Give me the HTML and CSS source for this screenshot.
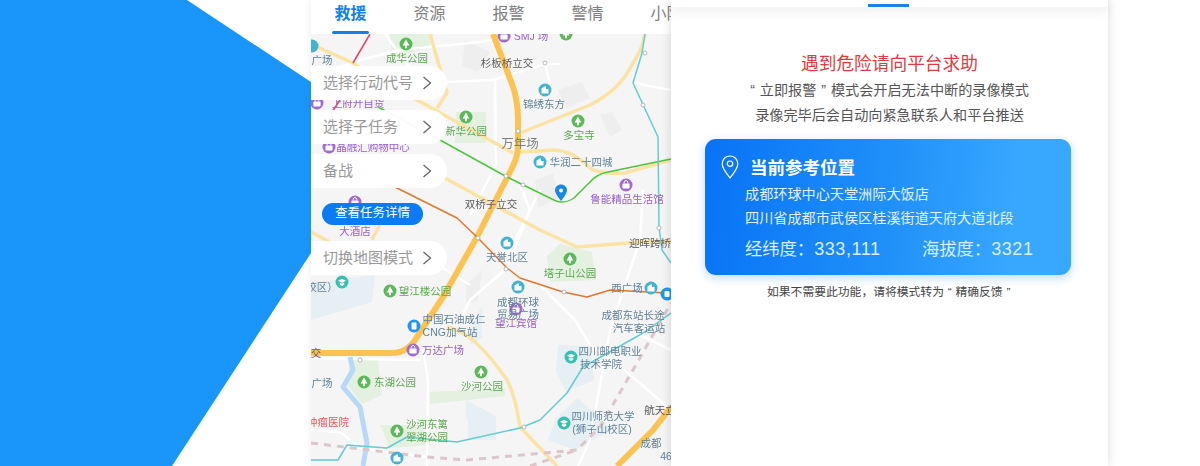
FILE: index.html
```html
<!DOCTYPE html>
<html lang="zh-CN">
<head>
<meta charset="utf-8">
<title>救援</title>
<link rel="stylesheet" href="styles.css">
</head>
<body>
<div class="page">
  <div class="wedge"></div>
  <section class="phone">
    <nav class="tabs">
      <span class="tab tab-on">救援</span>
      <span class="tab">资源</span>
      <span class="tab">报警</span>
      <span class="tab">警情</span>
      <span class="tab">小阳</span>
    </nav>
    <div class="map">
      <svg class="map-svg" viewBox="311 34 360 432" width="360" height="432" xmlns="http://www.w3.org/2000/svg">
        <defs>
          <symbol id="tree" viewBox="-7 -7 14 14"><circle r="6.5" fill="#5cb85a"/><path d="M0-4.500 3.400 1.600H.9V4.200H-.9V1.600H-3.400Z" fill="#fff"/></symbol>
          <symbol id="bag" viewBox="-7 -7 14 14"><circle r="6.500" fill="#a26ad0"/><rect x="-3.600" y="-1.600" width="7.200" height="5.200" rx="1" fill="#fff"/><path d="M-1.800-1.600V-2.600A1.800 1.800 0 0 1 1.800-2.600V-1.600" fill="none" stroke="#fff"/></symbol>
          <symbol id="bld" viewBox="-7 -7 14 14"><circle r="6.500" fill="#45b3cf"/><path d="M-3.500 3.400V-1.500L0-3.800 1 -3.200V-1H3.500V3.400Z" fill="#fff"/></symbol>
          <symbol id="sch" viewBox="-7 -7 14 14"><circle r="6.500" fill="#35c0b0"/><path d="M-4-1.200 0-3.200 4-1.200 0 .8ZM-2.200.5 0 1.600 2.200.5V2.800L0 4-2.200 2.800Z" fill="#fff"/></symbol>
        </defs>
        <rect class="ground" x="311" y="34" width="360" height="432"/>
        <path class="park" d="M455 143 456 112 486 112 486 143Z"/>
        <path class="park" d="M390 34 434 34 428 48 392 58Z"/>
        <path class="park" d="M547 256 560 244 592 252 596 280 550 282Z"/>
        <path class="park" d="M350 357 378 360 382 395 362 404 347 385Z"/>
        <path class="park" d="M380 425 420 425 432 445 390 448Z"/>
        <path class="park" d="M430 392 505 388 505 396 430 404Z"/>
        <path class="pale" d="M558 345 590 346 594 380 566 392 556 372Z"/>
        <path class="pale" d="M311 283 375 275 372 302 345 310 311 320Z"/>
        <path class="pale" d="M556 418 578 398 612 430 575 450 548 440Z"/>
        <path class="pale" d="M470 330 482 305 482 338 470 345Z"/>
        <path class="pale" d="M468 420 466 418 466 400 496 416 496 440 468 440Z"/>
        <path class="block" d="M466 285 482 270 478 302 466 302Z"/>
        <path class="block" d="M600 115 612 112 622 130 610 137Z"/>
        <path class="block" d="M558 90 582 82 590 98 566 108Z"/>
        <path class="block" d="M465 40 490 52 478 72 462 66Z"/>
        <path class="block" d="M535 180 553 174 560 198 538 208Z"/>
        <g class="road-w">
          <path d="M311 78 360 60 400 50 480 42 510 36"/>
          <path d="M446 82 493 80 545 64 560 64"/>
          <path d="M495 80 496 165 470 215"/>
          <path d="M545 64 552 92 536 96"/>
          <path d="M385 34 415 75M353 63 400 85"/>
          <path d="M520 185 530 210 507 268 470 300 460 320"/>
          <path d="M540 190 515 240 505 258"/>
          <path d="M540 285 575 320 590 345 615 362 671 410"/>
          <path d="M643 190 640 240 610 330 590 440 578 466"/>
          <path d="M311 430 340 432 360 448 427 457"/>
          <path d="M423 350 428 380 427 466"/>
          <path d="M633 83 671 90"/>
          <path d="M640 335 671 350"/>
          <path d="M430 260 470 285"/>
          <path d="M311 358 420 360"/>
        </g>
        <g class="road-y">
          <path d="M311 44 353 63 380 82 417 100 513 153"/>
          <path d="M430 34 447 93 437 108"/>
          <path d="M520 133 590 105Q620 90 633 63 642 50 645 34"/>
          <path d="M520 152 555 150Q575 152 590 168 598 174 625 173L671 160"/>
          <path d="M443 177 540 230 577 247 640 242 671 241"/>
          <path d="M447 327Q460 330 473 340 490 355 507 380 515 395 520 427L557 466"/>
          <path d="M311 232 345 250M382 220 372 240"/>
        </g>
        <path class="river" d="M350 357 353 370 343 387 360 407 367 443 363 466"/>
        <path class="rail" d="M311 443 427 457 467 460 577 450 600 427 633 370 671 303"/>
        <path class="rail" d="M530 466 577 450"/>
        <path class="road-o" d="M493 34 512 84Q518 100 518 120L518 146Q518 155 513 166L477 237 443 297 417 337Q408 353 392 353L311 353"/>
        <path class="road-o" d="M671 407 653 430 617 466"/>
        <path class="line-r" d="M370 34 353 63"/>
        <path class="line-r" d="M340 100 330 115"/>
        <path class="line-g" d="M378 107 440 140 507 177 556 201Q565 204 574 198L590 182Q597 174 608 172L671 159"/>
        <path class="line-c" d="M395 187 457 218 478 238 507 268 520 278 563 292 587 297 610 290 667 293"/>
        <path class="line-t" d="M645 34 642 53 633 83 658 137 659 227 662 250 671 263"/>
        <path class="line-t" d="M311 460 338 460 347 445 387 448 407 437 457 442 520 428 540 420 567 393 583 367 643 333 671 313"/>
        <g class="station">
          <circle cx="645" cy="53" r="2"/><circle cx="545" cy="63" r="2"/><circle cx="518" cy="131" r="2"/><circle cx="643" cy="105" r="2"/>
          <circle cx="506" cy="176" r="2"/><circle cx="523" cy="185" r="2"/><circle cx="478" cy="238" r="2"/><circle cx="659" cy="228" r="2"/>
          <circle cx="506" cy="269" r="2"/><circle cx="564" cy="292" r="2"/><circle cx="360" cy="360" r="2"/><circle cx="524" cy="427" r="2"/>
        </g>

        <use href="#bag" x="497" y="29" width="14" height="14"/>
        <use href="#tree" x="399" y="37" width="14" height="14"/>
        <use href="#tree" x="559" y="27" width="14" height="14"/>
        <use href="#bld" x="538" y="83" width="14" height="14"/>
        <use href="#tree" x="459" y="110" width="14" height="14"/>
        <use href="#tree" x="571" y="114" width="14" height="14"/>
        <use href="#bld" x="533" y="155" width="14" height="14"/>
        <use href="#bag" x="619" y="178" width="14" height="14"/>
        <use href="#bag" x="310" y="96" width="14" height="14"/>
        <use href="#bag" x="322" y="140" width="14" height="14"/>
        <use href="#bag" x="348" y="195" width="14" height="14"/>
        <use href="#bld" x="500" y="236" width="14" height="14"/>
        <use href="#tree" x="563" y="252" width="14" height="14"/>
        <use href="#bld" x="644" y="281" width="14" height="14"/>
        <use href="#sch" x="335" y="275" width="14" height="14"/>
        <use href="#tree" x="383" y="284" width="14" height="14"/>
        <use href="#bld" x="511" y="280" width="14" height="14"/>
        <use href="#bag" x="509" y="302" width="14" height="14"/>
        <use href="#bag" x="406" y="343" width="14" height="14"/>
        <use href="#sch" x="564" y="350" width="14" height="14"/>
        <use href="#tree" x="357" y="375" width="14" height="14"/>
        <use href="#tree" x="474" y="365" width="14" height="14"/>
        <use href="#tree" x="390" y="424" width="14" height="14"/>
        <use href="#sch" x="557" y="416" width="14" height="14"/>
        <use href="#bld" x="390" y="451" width="14" height="14"/>
        <circle cx="414" cy="326" r="6.5" class="fuel"/>
        <rect x="411.5" y="322.5" width="5" height="7" rx="1" class="fuel-in"/>
        <circle cx="667" cy="294" r="6.5" class="fuel"/>
        <rect x="664.5" y="291" width="5" height="6" rx="1" class="fuel-in"/>
        <circle cx="312" cy="46" r="6.5" class="teal-dot"/>

        <g class="lb-g">
          <text x="407" y="62">成华公园</text>
          <text x="466" y="135">新华公园</text>
          <text x="579" y="139">多宝寺</text>
          <text x="570" y="277">塔子山公园</text>
          <text x="425" y="295">望江楼公园</text>
          <text x="395" y="386">东湖公园</text>
          <text x="482" y="390">沙河公园</text>
          <text x="427" y="428">沙河东篱</text>
          <text x="427" y="441">翠湖公园</text>
        </g>
        <g class="lb-p">
          <text x="531" y="40">SMJ 场</text>
          <text x="358" y="107">上府开自货</text>
          <text x="373" y="151">晶融汇购物中心</text>
          <text x="627" y="203">鲁能精品生活馆</text>
          <text x="355" y="235">大酒店</text>
          <text x="516" y="327">望江宾馆</text>
          <text x="443" y="354">万达广场</text>
        </g>
        <g class="lb-d">
          <text x="507" y="67">杉板桥立交</text>
          <text x="491" y="208">双桥子立交</text>
          <text x="650" y="247">迎晖跨桥</text>
          <text x="316" y="357">交</text>
          <text x="660" y="414">航天立</text>
        </g>
        <text class="lb-big" x="520" y="148">万年场</text>
        <g class="lb-b">
          <text x="322" y="64">广场</text>
          <text x="544" y="108">锦绣东方</text>
          <text x="581" y="166">华润二十四城</text>
          <text x="507" y="261">天誉北区</text>
          <text x="627" y="292">西广场</text>
          <text x="518" y="306">成都环球</text>
          <text x="518" y="318">贸易广场</text>
          <text x="454" y="323">中国石油成仁</text>
          <text x="450" y="336">CNG加气站</text>
          <text x="633" y="319">成都东站长途</text>
          <text x="639" y="332">汽车客运站</text>
          <text x="322" y="387">广场</text>
          <text x="322" y="291">校区）</text>
          <text x="610" y="355">四川邮电职业</text>
          <text x="601" y="368">技术学院</text>
          <text x="603" y="420">四川师范大学</text>
          <text x="602" y="433">(狮子山校区)</text>
          <text x="651" y="447">成都</text>
          <text x="666" y="460">46</text>
        </g>
        <text class="lb-r" x="328" y="426">肿瘤医院</text>
        <path class="pin" d="M561 184.500C557.500 184.500 555 187.200 555 190.300 555 194.200 561 201 561 201S567 194.200 567 190.300C567 187.200 564.500 184.500 561 184.500Z"/>
        <circle class="pin-in" cx="561" cy="190.500" r="2"/>
      </svg>
      <div class="overlay">
        <div class="pill"><span>选择行动代号</span><svg class="chev" viewBox="0 0 10 14" width="10" height="14"><path d="M1.500 1 8.500 7 1.500 13"/></svg></div>
        <div class="pill"><span>选择子任务</span><svg class="chev" viewBox="0 0 10 14" width="10" height="14"><path d="M1.500 1 8.500 7 1.500 13"/></svg></div>
        <div class="pill"><span>备战</span><svg class="chev" viewBox="0 0 10 14" width="10" height="14"><path d="M1.500 1 8.500 7 1.500 13"/></svg></div>
        <div class="detail-btn">查看任务详情</div>
        <div class="pill"><span>切换地图模式</span><svg class="chev" viewBox="0 0 10 14" width="10" height="14"><path d="M1.500 1 8.500 7 1.500 13"/></svg></div>
      </div>
    </div>
  </section>
  <section class="panel">
    <div class="panel-top"><span class="panel-mark"></span></div>
    <h1 class="alert-title">遇到危险请向平台求助</h1>
    <p class="alert-line alert-first">“ 立即报警 ” 模式会开启无法中断的录像模式</p>
    <p class="alert-line alert-second">录像完毕后会自动向紧急联系人和平台推送</p>
    <div class="loc-card">
      <div class="loc-head">
        <svg class="loc-pin" viewBox="0 0 18 24" width="18" height="24"><path d="M9 1C4.600 1 1.200 4.400 1.200 8.700 1.200 13.500 6.300 19.600 9 22.800 11.700 19.600 16.800 13.500 16.800 8.700 16.800 4.400 13.400 1 9 1Z"/><circle cx="9" cy="8.700" r="2.700"/></svg>
        <h2 class="loc-title">当前参考位置</h2>
      </div>
      <p class="loc-addr loc-addr-a">成都环球中心天堂洲际大饭店</p>
      <p class="loc-addr loc-addr-b">四川省成都市武侯区桂溪街道天府大道北段</p>
      <div class="loc-stats">
        <span class="stat-a">经纬度：<span class="num">333,111</span></span>
        <span>海拔度：<span class="num">3321</span></span>
      </div>
    </div>
    <p class="foot-note">如果不需要此功能，请将模式转为 “ 精确反馈 ”</p>
  </section>
</div>
</body>
</html>
```

FILE: styles.css
```css
* { box-sizing: border-box; }
html, body { margin: 0; padding: 0; background: #fff; }
body { font-family: "Liberation Sans", "Noto Sans CJK SC", sans-serif; }
p, h1, h2 { margin: 0; font-weight: 400; }

.page { display: flex; width: 1200px; height: 466px; overflow: hidden; background: #fff; }

.wedge {
  flex: 0 0 311px; height: 466px; background: #1a96fb;
  clip-path: polygon(0 0, 187px 0, 311px 82px, 311px 253px, 172px 466px, 0 466px);
}

.phone {
  position: relative; flex: 0 0 360px; min-width: 0; height: 466px; display: flex; flex-direction: column;
  background: #fff; box-shadow: 0 0 8px rgba(0,0,0,.07);
}
.tabs { flex: 0 0 34px; display: flex; overflow: hidden; background: #fff; }
.tab {
  position: relative; flex: 0 0 79px; text-align: center; font-size: 16px; line-height: 27px; color: #808080;
}
.tab-on { color: #1480ea; font-weight: 700; }
.tab-on::after {
  content: ""; position: absolute; left: 21px; bottom: 0; width: 37px; height: 3px; background: #1480ea; border-radius: 2px;
}

.map { position: relative; flex: 1; overflow: hidden; }
.map-svg { display: block; filter: blur(0.35px); }
.ground { fill: #f5f5f6; }
.park { fill: #e4f1e0; }
.pale { fill: #e6eff3; }
.block { fill: #eeeeef; }
.road-w path { fill: none; stroke: #fff; stroke-width: 2.5; }
.road-w { stroke-linejoin: round; }
.road-y path { fill: none; stroke: #fbe3a4; stroke-width: 3.5; stroke-linejoin: round; }
.road-o { fill: none; stroke: #fdc352; stroke-width: 6; stroke-linejoin: round; }
.river { fill: none; stroke: #b7d8f7; stroke-width: 5; stroke-linejoin: round; }
.rail { fill: none; stroke: #dcc6ca; stroke-width: 3; stroke-dasharray: 7 6; }
.line-r { fill: none; stroke: #e2426a; stroke-width: 1.5; }
.line-g { fill: none; stroke: #4cc63a; stroke-width: 1.5; stroke-linejoin: round; }
.line-c { fill: none; stroke: #e8752a; stroke-width: 1.5; stroke-linejoin: round; }
.line-t { fill: none; stroke: #62cdd2; stroke-width: 1.5; stroke-linejoin: round; }
.station circle { fill: #fff; stroke: #a8a8a8; stroke-width: 0.8; }
.fuel { fill: #2196f3; }
.fuel-in { fill: #fff; }
.teal-dot { fill: #45b3cf; }
.lb-g text, .lb-p text, .lb-d text, .lb-b text, .lb-r, .lb-big { font-size: 10.500px; text-anchor: middle; }
.lb-g text { fill: #5aa84e; }
.lb-p text { fill: #9a5fc8; }
.lb-d text { fill: #5a5a5a; }
.lb-b text { fill: #5f8298; }
.lb-r { fill: #df5a5a; }
.lb-big { font-size: 12.500px; fill: #808080; }
.pin { fill: #1a86ea; }
.pin-in { fill: #fff; }

.overlay {
  position: absolute; left: 0; top: 32px; display: flex; flex-direction: column; align-items: flex-start;
}
.pill {
  display: flex; align-items: center; justify-content: space-between;
  width: 136px; height: 34px; margin-bottom: 10px; padding: 0 15px 3px 12px;
  border-radius: 0 17px 17px 0; background: rgba(255,255,255,.96); color: #999; font-size: 15px;
}
.chev { flex: none; margin-top: 3px; }
.chev path { fill: none; stroke: #666; stroke-width: 1.3; }
.detail-btn {
  width: 101px; height: 22px; margin: 5px 0 16px 11px; border-radius: 11px; background: #0a7bf2;
  color: #fff; font-size: 12.500px; line-height: 21px; text-align: center;
}

.panel {
  position: relative; flex: 0 0 437px; height: 466px; background: #fff;
  box-shadow: 0 0 10px rgba(0,0,0,.14);
}
.panel-top {
  height: 7px; position: relative; background: #fff; box-shadow: 0 3px 12px rgba(0,0,0,.1);
}
.panel-mark { position: absolute; left: 197px; bottom: 0; width: 41px; height: 3px; background: #1b84e6; }
.alert-title { margin-top: 44px; text-align: center; font-size: 17.700px; line-height: 26px; color: #de3a3f; }
.alert-line { text-align: center; font-size: 14.150px; line-height: 25px; color: #555; }
.alert-first { margin-top: 1px; word-spacing: 1px; }

.loc-card {
  width: 366px; height: 136px; margin: 11px 0 0 34px; padding: 15px 0 0 16px; border-radius: 11px;
  color: #fff; background: linear-gradient(95deg, #0873f6 0%, #2090f9 50%, #38a8ff 85%);
  box-shadow: 0 3px 10px rgba(40,140,240,.3);
}
.loc-head { display: flex; align-items: center; gap: 11px; height: 28px; }
.loc-pin { flex: none; margin-top: -2px; }
.loc-pin path, .loc-pin circle { fill: none; stroke: #fff; stroke-width: 1.2; }
.loc-title { font-size: 17.500px; font-weight: 700; line-height: 28px; }
.loc-addr { margin-left: 24px; font-size: 14.150px; line-height: 24px; color: #e4f1ff; }
.loc-addr-a { margin-top: 0; }
.loc-stats { display: flex; margin: 6px 0 0 24px; font-size: 17.300px; line-height: 26px; color: #dcedff; }
.stat-a { width: 177px; }
.num { font-size: 18px; letter-spacing: .6px; }
.foot-note { margin-top: 8px; padding-left: 96px; font-size: 11.800px; line-height: 18px; color: #444; word-spacing: .5px; }
```
